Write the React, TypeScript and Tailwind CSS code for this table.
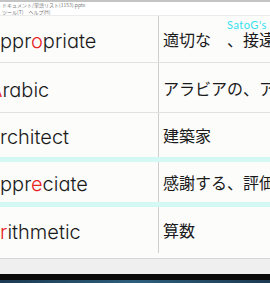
const rows = [
  { head: 'a', pre: 'ppr', red: 'o', post: 'priate', ja: '適切な　、接遠', h: 'h-[47px]', border: 'border-b border-[#e2e2e2]' },
  { head: 'A', pre: '', red: '', post: 'rabic', ja: 'アラビアの、アラビア語', h: 'h-[50px]', border: 'border-b border-[#e2e2e2]' },
  { head: 'a', pre: 'rchitect', red: '', post: '', ja: '建築家', h: 'h-[49px]', border: 'border-b-[5px] border-[#d4f9f5]' },
  { head: 'a', pre: 'ppr', red: 'e', post: 'ciate', ja: '感謝する、評価する', h: 'h-[45px]', border: 'border-b-[5px] border-[#d4f9f5]' },
  { head: 'a', pre: '', red: 'r', post: 'ithmetic', ja: '算数', h: 'h-[46px]', border: '' },
];

export default function App() {
  return (
    <div className="relative flex h-[283px] w-[270px] flex-col overflow-hidden bg-[#fcfcfb] font-['Noto_Sans_CJK_JP',sans-serif]">
      <header className="h-[16px] shrink-0 border-t-2 border-b border-[#c4c4c4] border-b-[#ececec] bg-white pl-[2px] text-[5px] leading-[6px] text-[#777]">
        <p className="whitespace-nowrap">ドキュメント/単語リスト(1153).pptx</p>
        <p className="mt-[1px] whitespace-nowrap">ツール(T)　ヘルプ(H)</p>
      </header>

      <main className="flex-1 overflow-hidden">
        {rows.map((r) => (
          <div key={r.ja} className={`flex ${r.h} ${r.border}`}>
            <div className="flex w-[159px] shrink-0 items-center overflow-hidden border-r border-[#cfcfcf] pt-[4px]">
              <span
                className={`${r.head === 'A' ? '-ml-[11px]' : '-ml-[12px]'} whitespace-nowrap font-['Inter',sans-serif] text-[20px] font-light text-[#1a1a1a] [font-feature-settings:'cv11']`}
              >
                <span className={r.head === 'A' ? 'text-[#e8231f]' : ''}>{r.head}</span>
                {r.pre}
                <span className="text-[#e8231f]">{r.red}</span>
                {r.post}
              </span>
            </div>
            <div className="flex flex-1 items-center overflow-hidden pl-[4px]">
              <span className="whitespace-nowrap text-[16px] text-[#1a1a1a]">{r.ja}</span>
            </div>
          </div>
        ))}
      </main>

      <div className="h-[16px] shrink-0 border-t border-[#d6d6d6] bg-[#efefef]" />
      <div className="h-[6px] shrink-0 bg-[#0a0a0a]" />
      <div className="h-[3px] shrink-0 bg-gradient-to-r from-[#1c3a52] via-[#2d5f7c] to-[#1c3a52]" />

      <span className="absolute left-[227px] top-[17px] font-['Lato',sans-serif] text-[11px] tracking-[0.5px] text-[#35dff0]">
        SatoG's
      </span>
    </div>
  );
}
